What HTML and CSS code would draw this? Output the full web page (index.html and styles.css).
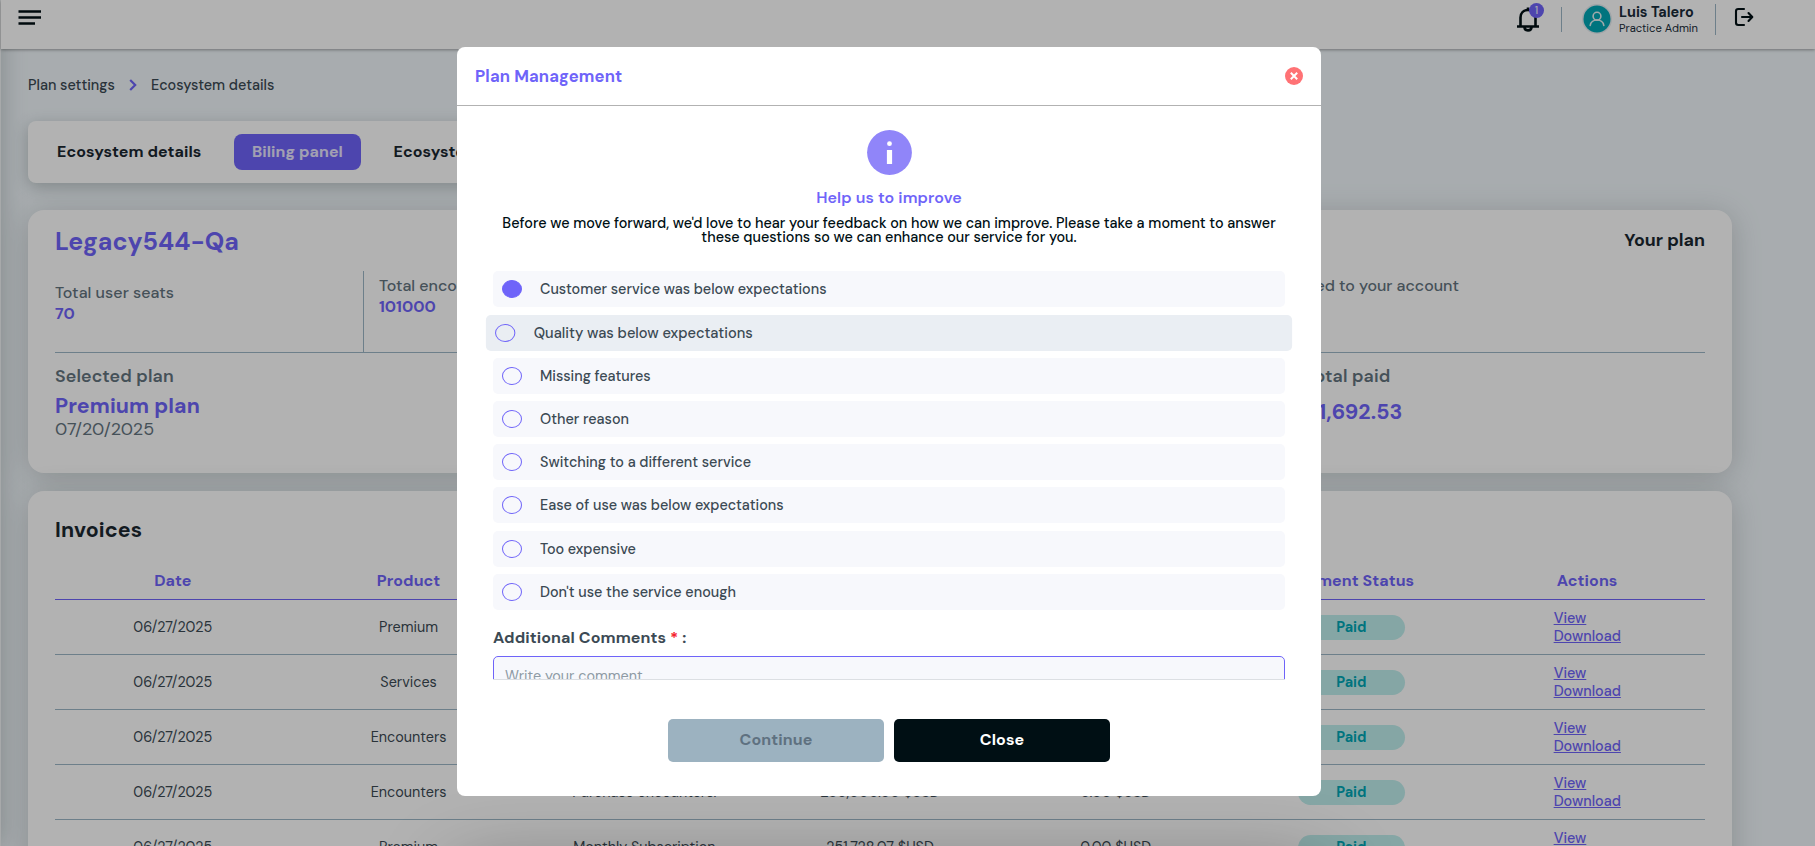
FILE: index.html
```html
<!DOCTYPE html>
<html lang="en">
<head>
<meta charset="utf-8">
<title>Plan settings</title>
<link rel="stylesheet" href="styles.css">
</head>
<body>
<div class="app">
  <header class="topbar">
    <svg class="menu-icon" width="24" height="16" viewBox="0 0 24 16"><path d="M0.500 1.500H23M0.500 7.500H23M0.500 13.500H17" stroke="#000f14" stroke-width="2.600" fill="none"/></svg>
    <div class="topbar-right">
      <div class="bell">
        <svg width="24" height="26" viewBox="0 0 24 26" fill="none" stroke="#000f14" stroke-width="2.600"><path d="M1 20.500H23M4.500 20V11.500C4.500 7 7.500 4 12 4S19.500 7 19.500 11.500V20" stroke-linejoin="round"/><path d="M12 1.500V4" /><path d="M8.500 21C8.500 25.500 15.500 25.500 15.500 21"/></svg>
        <span class="bell-count">1</span>
      </div>
      <span class="rule rule-a"></span>
      <svg class="avatar" width="30" height="30" viewBox="0 0 30 30"><circle cx="15" cy="15" r="15" fill="#e6ecf1"/><circle cx="15" cy="15" r="13.500" fill="#00a7b5"/><g fill="none" stroke="#e6f2f4" stroke-width="1.600" stroke-linecap="round"><circle cx="15" cy="12.200" r="3.900"/><path d="M8.200 21.500C9 14.200 21 14.200 21.800 21.500"/></g></svg>
      <div class="user"><span class="user-name">Luis Talero</span><span class="user-role">Practice Admin</span></div>
      <span class="rule rule-b"></span>
      <svg class="logout" width="20" height="20" viewBox="0 0 20 20" fill="none" stroke="#000f14" stroke-width="2.100" stroke-linejoin="round" stroke-linecap="round"><path d="M10 2H4.200Q2 2 2 4.200V15.800Q2 18 4.200 18H10"/><path d="M8 10H18M14.500 6L18.300 10L14.500 14"/></svg>
    </div>
  </header>

  <main class="page">
    <nav class="crumbs">
      <span class="crumb-a">Plan settings</span>
      <svg width="8" height="12" viewBox="0 0 8 12" fill="none" stroke="#6f64f9" stroke-width="2.200"><path d="M1.200 1L6.200 6L1.200 11"/></svg>
      <span class="crumb-b">Ecosystem details</span>
    </nav>

    <div class="tabs">
      <span class="tab">Ecosystem details</span>
      <span class="tab tab-on">Biling panel</span>
      <span class="tab">Ecosystem users</span>
    </div>

    <section class="card plan">
      <div class="plan-head"><h1>Legacy544-Qa</h1><span class="your-plan">Your plan</span></div>
      <div class="plan-top">
        <div class="stat stat-first"><span class="label">Total user seats</span><b class="num">70</b></div>
        <div class="stat stat-mid"><span class="label">Total encounters</span><b class="num">101000</b></div>
        <div class="stat stat-last"><span class="label label-acc">Users added to your account</span></div>
      </div>
      <div class="plan-bottom">
        <div class="sel"><span class="label2">Selected plan</span><b class="plan-name">Premium plan</b><span class="plan-date">07/20/2025</span></div>
        <div class="paid-total"><span class="label2">Total paid</span><b class="paid-sum">$1,692.53</b></div>
      </div>
    </section>

    <section class="card invoices">
      <h2>Invoices</h2>
      <div class="row head"><span>Date</span><span>Product</span><span></span><span></span><span></span><span>Payment Status</span><span>Actions</span></div>
      <div class="row"><span>06/27/2025</span><span>Premium</span><span></span><span></span><span></span><span><i class="pill">Paid</i></span><span class="acts"><a>View</a><a>Download</a></span></div>
      <div class="row"><span>06/27/2025</span><span>Services</span><span></span><span></span><span></span><span><i class="pill">Paid</i></span><span class="acts"><a>View</a><a>Download</a></span></div>
      <div class="row"><span>06/27/2025</span><span>Encounters</span><span></span><span></span><span></span><span><i class="pill">Paid</i></span><span class="acts"><a>View</a><a>Download</a></span></div>
      <div class="row"><span>06/27/2025</span><span>Encounters</span><span>Purchase encounters.</span><span>230,000.00 $USD</span><span>0.00 $USD</span><span><i class="pill">Paid</i></span><span class="acts"><a>View</a><a>Download</a></span></div>
      <div class="row"><span>06/27/2025</span><span>Premium</span><span>Monthly Subscription</span><span>251,728.07 $USD</span><span>0.00 $USD</span><span><i class="pill">Paid</i></span><span class="acts"><a>View</a><a>Download</a></span></div>
    </section>
  </main>
  <div class="side-edge"></div>
</div>

<div class="overlay">
  <div class="glow"></div>
  <div class="modal">
    <div class="modal-head">
      <span class="modal-title">Plan Management</span>
      <svg width="18" height="18" viewBox="0 0 18 18"><circle cx="9" cy="9" r="9" fill="#ff7275"/><path d="M5.800 5.800L12.200 12.200M12.200 5.800L5.800 12.200" stroke="#fff" stroke-width="2"/></svg>
    </div>
    <div class="modal-body">
      <svg class="info" width="45" height="45" viewBox="0 0 45 45"><circle cx="22.500" cy="22.500" r="22.400" fill="#9085f9"/><circle cx="22.500" cy="13.700" r="2.400" fill="#fff"/><rect x="19.900" y="20" width="5.200" height="14" fill="#fff"/></svg>
      <h3>Help us to improve</h3>
      <p>Before we move forward, we'd love to hear your feedback on how we can improve. Please take a moment to answer these questions so we can enhance our service for you.</p>
      <div class="options">
        <div class="opt"><i class="radio radio-on"></i><span>Customer service was below expectations</span></div>
        <div class="opt opt-hover"><i class="radio"></i><span>Quality was below expectations</span></div>
        <div class="opt"><i class="radio"></i><span>Missing features</span></div>
        <div class="opt"><i class="radio"></i><span>Other reason</span></div>
        <div class="opt"><i class="radio"></i><span>Switching to a different service</span></div>
        <div class="opt"><i class="radio"></i><span>Ease of use was below expectations</span></div>
        <div class="opt"><i class="radio"></i><span>Too expensive</span></div>
        <div class="opt"><i class="radio"></i><span>Don't use the service enough</span></div>
      </div>
      <div class="comments">Additional Comments <em>*</em> :</div>
      <div class="field-clip"><div class="field">Write your comment</div></div>
    </div>
    <div class="modal-foot"><button class="btn btn-off">Continue</button><button class="btn btn-dark">Close</button></div>
  </div>
</div>
</body>
</html>
```
FILE: styles.css
```css
* { box-sizing: border-box; margin: 0; padding: 0; }
body { width: 1815px; height: 846px; overflow: hidden; position: relative; font-family: "DM Sans", Inter, sans-serif; color: #3c4a54; }
.app { position: relative; z-index: 0; height: 846px; overflow: hidden; background: #f1f7fb; }
svg { display: block; flex: none; }

.topbar { position: relative; z-index: 2; height: 49px; margin-left: 1px; padding-left: 17px; display: flex; justify-content: space-between; align-items: flex-start; background: #fff; box-shadow: 0 1px 3px rgba(0,0,0,.35); }
.menu-icon { margin-top: 10px; }
.topbar-right { display: flex; align-items: flex-start; padding-right: 61px; }
.bell { position: relative; margin-top: 6px; width: 24px; }
.bell-count { position: absolute; left: 13px; top: -3px; width: 15px; height: 15px; border-radius: 50%; background: #6f64f9; color: #fff; font-size: 11px; line-height: 15px; text-align: center; }
.rule { width: 1px; background: #9cb7c6; }
.rule-a { height: 25px; margin: 7px 20px 0 21px; }
.avatar { margin-top: 4px; }
.user { width: 87px; margin-left: 7px; padding-top: 4px; display: flex; flex-direction: column; white-space: nowrap; color: #1a2c3a; }
.user-name { font-size: 14.400px; font-weight: 700; line-height: 17px; }
.user-role { font-size: 11.200px; line-height: 14px; }
.rule-b { height: 31px; margin: 4px 18px 0 9px; }
.logout { margin-top: 7px; }

.page { padding: 27px 0 0 28px; }
.crumbs { display: flex; align-items: center; height: 18px; font-size: 14.400px; font-weight: 500; }
.crumb-a { width: 101px; }
.crumb-b { margin-left: 14px; }
.tabs { width: 630px; height: 62px; margin-top: 27px; padding: 0 11px; display: flex; align-items: center; background: #fff; border-radius: 8px; box-shadow: 0 4px 16px rgba(60,75,75,.3); }
.tab { height: 36px; line-height: 36px; padding: 0 18px; margin-right: 14.500px; border-radius: 8px; font-size: 16px; font-weight: 700; letter-spacing: .08px; color: #1a2730; }
.tab-on { background: #6f64f9; color: #e8e6ff; }

.card { width: 1704px; padding: 0 27px; background: #fff; border-radius: 16px; box-shadow: 0 4px 30px rgba(60,68,66,.23); }
.plan { height: 263px; margin-top: 27px; }
.plan-head { height: 61px; padding-top: 16px; display: flex; justify-content: space-between; }
h1 { font-size: 24.900px; line-height: 31px; font-weight: 700; color: #6f64f9; }
.your-plan { font-size: 17.800px; line-height: 29px; font-weight: 700; color: #1a2730; }
.plan-top { height: 82px; display: flex; border-bottom: 1px solid #9cb7c6; }
.stat { display: flex; flex-direction: column; line-height: 21px; font-size: 16px; font-weight: 500; color: #64747f; }
.stat-first { width: 309px; padding-top: 11px; letter-spacing: .06px; border-right: 1px solid #9cb7c6; }
.stat-mid { width: 800px; padding: 4px 0 0 15px; }
.stat-last { width: 295px; padding-top: 4px; align-items: flex-end; }
.num { color: #6f64f9; font-weight: 700; }
.plan-bottom { display: flex; padding-top: 11px; color: #64747f; }
.sel, .paid-total { display: flex; flex-direction: column; }
.sel { width: 1250.500px; }
.label2 { font-size: 17.800px; line-height: 24px; font-weight: 600; letter-spacing: .12px; }
.plan-name { margin-top: 6px; font-size: 21.300px; line-height: 24px; font-weight: 700; letter-spacing: .1px; color: #6f64f9; }
.plan-date { font-size: 17.900px; line-height: 22px; }
.paid-sum { margin-top: 12px; font-size: 21.300px; line-height: 24px; font-weight: 700; letter-spacing: .1px; color: #6f64f9; }

.invoices { height: 420px; margin-top: 18px; }
h2 { padding-top: 25px; height: 72px; font-size: 21.300px; line-height: 28px; font-weight: 700; letter-spacing: .1px; color: #1a2730; }
.row { display: grid; grid-template-columns: repeat(7, 1fr); height: 55px; border-bottom: 1px solid #9cb7c6; align-items: center; text-align: center; font-size: 14.400px; white-space: nowrap; }
.head { height: 37px; padding-bottom: 2px; border-color: #6f64f9; font-size: 16px; font-weight: 700; letter-spacing: .08px; color: #6f64f9; }
.pill { display: block; width: 107px; height: 25px; margin: 0 auto; border-radius: 13px; background: #bfeeed; color: #00a7b5; font-style: normal; font-weight: 700; line-height: 25px; }
.acts { display: flex; flex-direction: column; align-items: flex-start; width: 67px; margin: 0 auto; color: #6f64f9; line-height: 18px; font-weight: 500; }
.acts a { text-decoration: underline; }
.side-edge { position: absolute; left: -40px; top: 0; width: 41px; height: 846px; background: #f0f2f4; box-shadow: 0 0 26px rgba(60,75,75,.3); }

.overlay { position: absolute; z-index: 5; inset: 0; display: flex; justify-content: center; align-items: flex-start; padding: 47px 37px 0 0; background: rgba(0,0,0,.3); overflow: hidden; }
.glow { position: absolute; left: 457px; top: 875px; width: 864px; height: 60px; box-shadow: 0 0 80px rgba(0,0,0,.4); }
.modal { position: relative; width: 864px; height: 749px; background: #fff; border-radius: 8px; }
.modal-head { height: 59px; padding: 0 18px; display: flex; align-items: center; justify-content: space-between; border-bottom: 1px solid #b2b2b2; }
.modal-title { font-size: 16.600px; font-weight: 700; letter-spacing: .13px; color: #6f64f9; }
.modal-body { padding: 24px 36px 0; display: flex; flex-direction: column; }
.info { align-self: center; }
h3 { margin-top: 12px; text-align: center; font-size: 16px; line-height: 22px; font-weight: 600; letter-spacing: .1px; color: #6f64f9; }
p { margin-top: 7px; text-align: center; font-size: 14.400px; line-height: 14px; font-weight: 500; color: #000f14; }
.options { margin-top: 27.400px; display: flex; flex-direction: column; gap: 7.200px; }
.opt { height: 36px; display: flex; align-items: center; padding-left: 9px; gap: 18px; border-radius: 5px; background: #f7f8fc; font-size: 14.400px; font-weight: 500; color: #3c4a54; }
.opt-hover { transform: scaleX(1.018); background: #eaeef3; }
.radio { width: 20px; height: 18px; border: 1px solid #6f64f9; border-radius: 50%; }
.radio-on { background: #6f64f9; }
.comments { margin-top: 17px; font-size: 16px; line-height: 22px; font-weight: 700; letter-spacing: .1px; }
.comments em { color: #f5222d; font-style: normal; }
.field-clip { height: 24px; margin-top: 7.600px; overflow: hidden; border-bottom: 1px solid #dcdfe3; }
.field { height: 80px; padding: 9px 11px; border: 1px solid #6f64f9; border-radius: 5px; background: #f7f8fc; font-size: 14.400px; line-height: 20px; color: #8e9ba5; }
.modal-foot { display: flex; justify-content: center; gap: 10px; margin-top: 39px; }
.btn { width: 216px; height: 43px; padding-bottom: 2px; border: 0; border-radius: 5px; font: 700 16px "DM Sans", Inter, sans-serif; letter-spacing: .08px; }
.btn-off { background: #9cb2c0; color: #5f7180; }
.btn-dark { background: #000f14; color: #fff; }
```
